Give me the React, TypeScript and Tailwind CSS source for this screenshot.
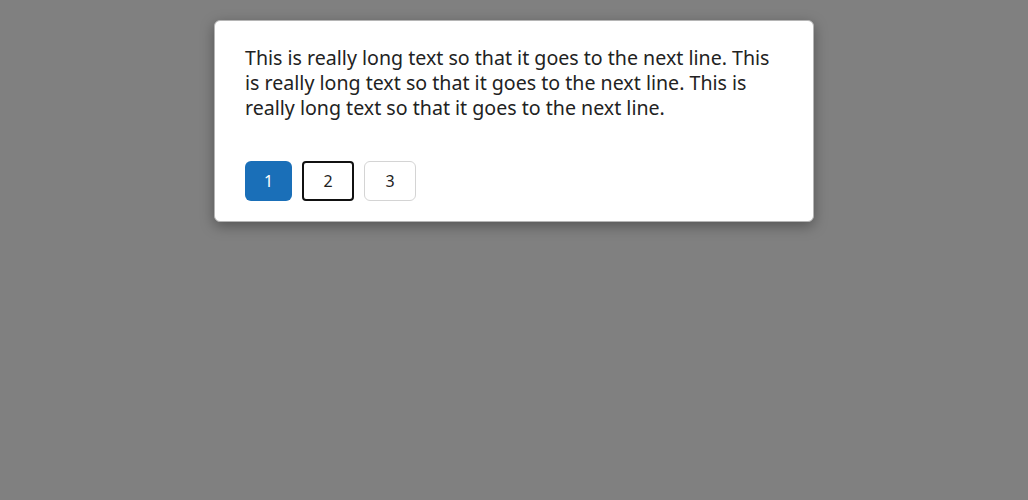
import React from "react";

const App = () => {
  return (
    <div className="min-h-[500px] w-full bg-[#808080] pt-[20px] flex justify-center" style={{ fontFamily: '"Noto Sans", sans-serif' }}>
      <div className="w-[600px] h-[202px] bg-white rounded-md border border-[#b5b5b5] shadow-[0_4px_14px_rgba(0,0,0,0.35)] px-[30px] pt-[24px] pb-[20px]">
        <p className="text-[19.6px] leading-[25px] text-[#222]">
          This is really long text so that it goes to the next line. This is really long text so that it goes to the next line. This is really long text so that it goes to the next line.
        </p>
        <div className="flex gap-[10px] mt-[41px]">
          <button className="w-[47px] h-[40px] rounded-md bg-[#1a6fb8] text-white text-[16px]">1</button>
          <button className="w-[52px] h-[40px] rounded-[4px] border-2 border-[#111] bg-white text-[#222] text-[16px]">2</button>
          <button className="w-[52px] h-[40px] rounded-md border border-[#d4d4d4] bg-white text-[#222] text-[16px]">3</button>
        </div>
      </div>
    </div>
  );
};

export default App;
